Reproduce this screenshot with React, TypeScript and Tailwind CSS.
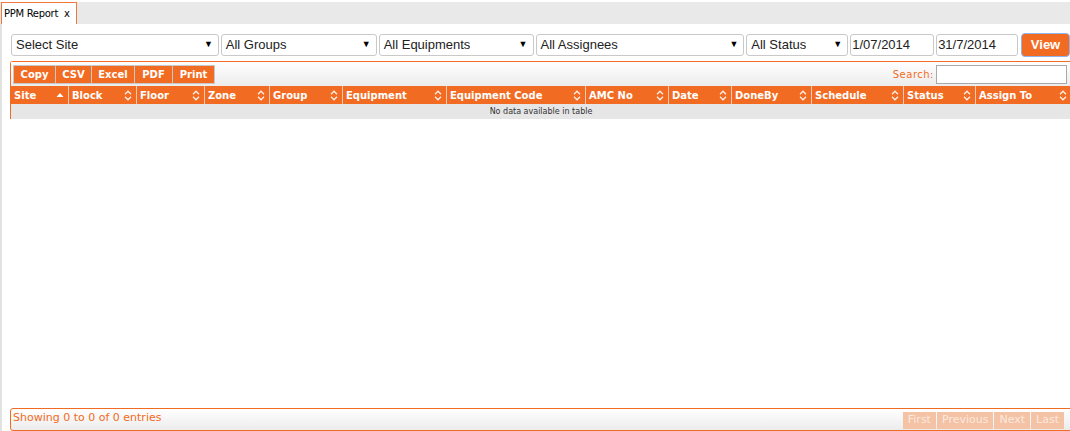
import React from "react";

const columns = [
  { name: "Site", w: 57, asc: true },
  { name: "Block", w: 68 },
  { name: "Floor", w: 68 },
  { name: "Zone", w: 65 },
  { name: "Group", w: 73 },
  { name: "Equipment", w: 104 },
  { name: "Equipment Code", w: 139 },
  { name: "AMC No", w: 83 },
  { name: "Date", w: 63 },
  { name: "DoneBy", w: 80 },
  { name: "Schedule", w: 92 },
  { name: "Status", w: 72 },
  { name: "Assign To", w: 96 },
];

const buttons = [
  { label: "Copy", w: 41 },
  { label: "CSV", w: 36 },
  { label: "Excel", w: 43 },
  { label: "PDF", w: 38 },
  { label: "Print", w: 42 },
];

function SortBoth() {
  return (
    <svg width="8" height="11" viewBox="0 0 8 11" fill="none" stroke="#fff" strokeWidth="1.3" className="opacity-90">
      <path d="M1 4.2 L4 1.2 L7 4.2" />
      <path d="M1 6.8 L4 9.8 L7 6.8" />
    </svg>
  );
}

function SortAsc() {
  return (
    <svg width="8" height="6" viewBox="0 0 8 6" fill="#fff">
      <path d="M0.5 5 L4 1 L7.5 5 Z" />
    </svg>
  );
}

function FakeSelect({ label, w }: { label: string; w: string }) {
  return (
    <div className={`${w} h-[22px] flex items-center justify-between rounded-[3px] border border-[#c9c9c9] bg-white pl-[4px] pr-[5px] text-[13px] text-[#222]`}>
      <span>{label}</span>
      <span className="text-[9px] text-black">▼</span>
    </div>
  );
}

export default function App() {
  return (
    <div className="h-[431px] w-[1070px] overflow-hidden bg-white flex flex-col" style={{ fontFamily: '"Liberation Sans", Arial, sans-serif' }}>
      <div className="h-[2px] bg-white" />
      <div className="h-[22px] bg-[#e9e9e9] flex">
        <div className="ml-[1px] w-[76px] h-[22px] bg-white border-l border-r border-t border-[#f0783a] flex items-center pl-[2px] text-[10px] text-black whitespace-nowrap" style={{ fontFamily: '"DejaVu Sans", Verdana, sans-serif' }}>
          <span className="tracking-[-0.3px]">PPM Report</span>
          <span className="ml-[6px] text-[10px]">x</span>
        </div>
      </div>
      <div className="flex-1 flex flex-col border-l-2 border-[#e2e2e2]">
        <div className="mt-[9px] ml-[9px] flex items-center gap-[2px] h-[24px]">
          <FakeSelect label="Select Site" w="w-[208px]" />
          <FakeSelect label="All Groups" w="w-[156px]" />
          <FakeSelect label="All Equipments" w="w-[155px]" />
          <FakeSelect label="All Assignees" w="w-[209px]" />
          <FakeSelect label="All Status" w="w-[102px]" />
          <div className="w-[84px] h-[22px] flex items-center rounded-[3px] border border-[#c9c9c9] pl-[1px] text-[13px] text-[#222]">1/07/2014</div>
          <div className="w-[82px] h-[22px] flex items-center rounded-[3px] border border-[#c9c9c9] pl-[1px] text-[13px] text-[#222]">31/7/2014</div>
          <div className="ml-[1px] w-[49px] h-[24px] flex items-center justify-center rounded-[4px] bg-[#f26b23] border border-[#8fb4f0] text-white text-[13px] font-bold">View</div>
        </div>

        <div className="mt-[4px] ml-[8px] w-[1062px] border border-[#f26b23] rounded-tl-[3px] border-b-0" style={{ fontFamily: '"DejaVu Sans", Verdana, sans-serif' }}>
          <div className="h-[24px] bg-gradient-to-b from-white to-[#ececec] flex items-center justify-between pl-[2px] pr-[4px]">
            <div className="flex h-[19px] border border-[#c8c8c8]">
              {buttons.map((b, i) => (
                <div key={b.label} style={{ width: b.w }} className={`bg-[#f26b23] text-white text-[10px] font-bold flex items-center justify-center ${i > 0 ? "border-l border-[#c8c8c8]" : ""}`}>{b.label}</div>
              ))}
            </div>
            <div className="flex items-center">
              <span className="text-[10px] text-[#f26b23] tracking-[0.5px]">Search:</span>
              <div className="ml-[2px] w-[131px] h-[19px] border border-[#a9a9a9] bg-white" />
            </div>
          </div>
          <div className="flex h-[18px] bg-[#f26b23]">
            {columns.map((c, i) => (
              <div key={c.name} style={{ width: c.w }} className={`flex items-center justify-between pl-[3px] pr-[4px] text-white text-[10px] font-bold shrink-0 ${i > 0 ? "border-l border-[#f7c9ad]" : ""}`}>
                <span>{c.name}</span>
                {c.asc ? <SortAsc /> : <SortBoth />}
              </div>
            ))}
          </div>
          <div className="h-[15px] bg-[#e6e6e6] flex items-center justify-center text-[8px] text-[#333]">No data available in table</div>
        </div>

        <div className="flex-1" />

        <div className="ml-[8px] w-[1062px] h-[23px] border border-[#f26b23] rounded-l-[3px] bg-gradient-to-b from-white to-[#ececec] flex items-center justify-between pl-[2px]" style={{ fontFamily: '"DejaVu Sans", Verdana, sans-serif' }}>
          <span className="text-[11px] text-[#f26b23] -mt-[3px]">Showing 0 to 0 of 0 entries</span>
          <div className="flex gap-[1px] mr-[7px] self-end mb-[1px]">
            {["First", "Previous", "Next", "Last"].map((p) => (
              <div key={p} className="h-[17px] bg-[#f4c2a5] text-[#fce9de] text-[11px] flex items-center px-[5px]">{p}</div>
            ))}
          </div>
        </div>
      </div>
    </div>
  );
}
